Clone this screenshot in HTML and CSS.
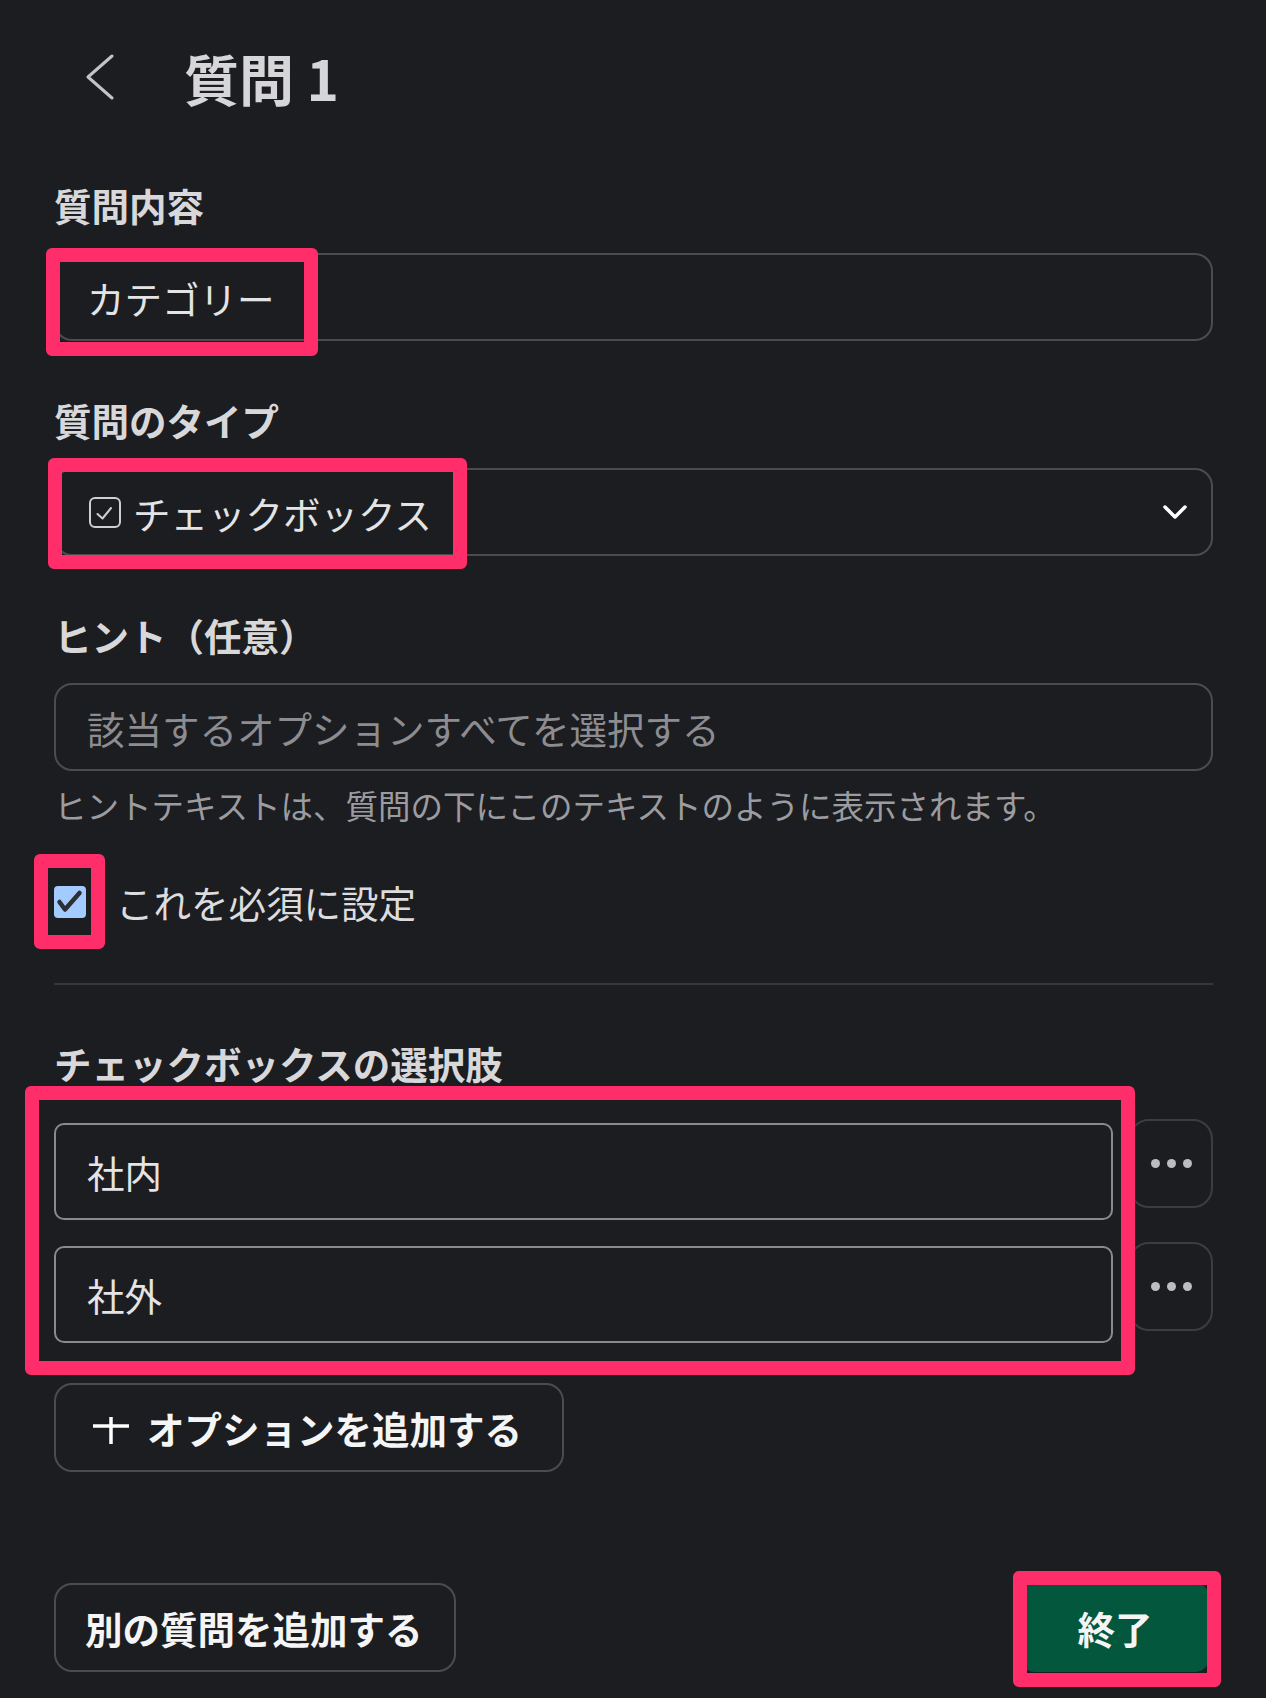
FILE: index.html
```html
<!DOCTYPE html>
<html lang="ja">
<head>
<meta charset="utf-8">
<title>質問 1</title>
<link rel="stylesheet" href="styles.css">
</head>
<body>
<div class="page">
  <header class="header">
    <svg class="back" width="28" height="46" viewBox="0 0 28 46" aria-hidden="true"><polyline points="26,2 2,23 26,44"/></svg>
    <h1 class="title">質問 1</h1>
  </header>

  <section class="field field-first">
    <div class="label">質問内容</div>
    <div class="input">カテゴリー</div>
  </section>

  <section class="field">
    <div class="label">質問のタイプ</div>
    <div class="input select">
      <svg class="type-icon" width="32" height="31" viewBox="0 0 32 31" aria-hidden="true"><rect x="1" y="1" width="30" height="29" rx="5"/><polyline points="8.5,17 13.5,21.5 22,11"/></svg>
      <span class="select-text">チェックボックス</span>
      <svg class="caret" width="26" height="16" viewBox="0 0 26 16" aria-hidden="true"><polyline points="3,3 13,13 23,3"/></svg>
    </div>
  </section>

  <section class="field">
    <div class="label">ヒント（任意）</div>
    <div class="input placeholder">該当するオプションすべてを選択する</div>
    <p class="help">ヒントテキストは、質問の下にこのテキストのように表示されます。</p>
  </section>

  <div class="required">
    <span class="cb"><svg width="32" height="32" viewBox="0 0 32 32" aria-hidden="true"><rect width="32" height="32" rx="4"/><polyline points="5.5,16 11,23.5 25.5,7"/></svg></span>
    <span class="required-text">これを必須に設定</span>
  </div>

  <div class="divider"></div>

  <section class="options">
    <div class="label">チェックボックスの選択肢</div>
    <div class="option-list">
      <div class="option-row">
        <div class="option-input">社内</div>
        <div class="more"><i></i><i></i><i></i></div>
      </div>
      <div class="option-row">
        <div class="option-input">社外</div>
        <div class="more"><i></i><i></i><i></i></div>
      </div>
    </div>
    <div class="btn add-option">
      <svg class="plus" width="36" height="36" viewBox="0 0 36 36" aria-hidden="true"><line x1="0" y1="16" x2="36" y2="16"/><line x1="18" y1="7" x2="18" y2="34"/></svg>
      <span>オプションを追加する</span>
    </div>
  </section>

  <footer class="footer">
    <div class="btn">別の質問を追加する</div>
    <div class="btn primary">終了</div>
  </footer>

  <div class="hl hl-1"></div>
  <div class="hl hl-2"></div>
  <div class="hl hl-3"></div>
  <div class="hl hl-4"></div>
  <div class="hl hl-5"></div>
</div>
</body>
</html>
```

FILE: styles.css
```css
* { box-sizing: border-box; }

html, body {
  margin: 0;
  padding: 0;
  background: #1c1d21;
}

body {
  font-family: "Noto Sans CJK JP", "Noto Sans", sans-serif;
  color: #dcdcde;
}

.page {
  position: relative;
  width: 1266px;
  min-height: 1698px;
  padding: 0 53px 0 54px;
  overflow: hidden;
}

.header {
  display: flex;
  align-items: center;
  height: 107px;
  padding-top: 47px;
  padding-left: 32px;
}

.back {
  flex: none;
  fill: none;
  stroke: #c4c4c7;
  stroke-width: 3;
  stroke-linecap: round;
  stroke-linejoin: round;
}

.title {
  margin: 0 0 0 70px;
  font-size: 55px;
  line-height: 60px;
  font-weight: 700;
  color: #d6d6d8;
}

.field {
  margin-top: 57px;
}

.field-first {
  margin-top: 76px;
}

.label {
  font-size: 37.5px;
  line-height: 44px;
  font-weight: 700;
  color: #d8d8da;
  margin-bottom: 26px;
}

.input {
  display: flex;
  align-items: center;
  height: 88px;
  padding-left: 31px;
  border: 2px solid #4b4c51;
  border-radius: 18px;
  font-size: 37.5px;
  color: #e4e4e6;
}

.placeholder {
  color: #8d8d91;
}

.select {
  padding-right: 23px;
}

.type-icon {
  flex: none;
  margin-left: 2px;
  fill: none;
  stroke: #cfcfd2;
  stroke-width: 2;
  stroke-linecap: round;
  stroke-linejoin: round;
}

.select-text {
  margin-left: 12px;
}

.caret {
  margin-left: auto;
  fill: none;
  stroke: #ffffff;
  stroke-width: 3.5;
  stroke-linecap: round;
  stroke-linejoin: round;
}

.help {
  margin: 14px 0 0;
  font-size: 32.5px;
  line-height: 40px;
  color: #9c9ca0;
}

.required {
  display: flex;
  align-items: center;
  gap: 30px;
  height: 44px;
  margin-top: 55px;
}

.cb {
  display: flex;
  flex: none;
}

.cb rect {
  fill: #a3cbff;
}

.cb polyline {
  fill: none;
  stroke: #2e2f34;
  stroke-width: 4.5;
  stroke-linecap: round;
  stroke-linejoin: round;
}

.required-text {
  font-size: 37.5px;
  line-height: 44px;
  color: #dcdcde;
}

.divider {
  height: 2px;
  margin-top: 59px;
  background: #36373b;
}

.options {
  margin-top: 56px;
}

.options .label {
  margin-bottom: 0;
}

.option-list {
  display: flex;
  flex-direction: column;
  gap: 22px;
  margin-top: 34px;
}

.option-row {
  display: flex;
  align-items: flex-start;
  gap: 16px;
}

.option-input {
  flex: 1;
  display: flex;
  align-items: center;
  height: 97px;
  margin-top: 4px;
  padding-left: 31px;
  border: 2px solid #8a8a8e;
  border-radius: 10px;
  font-size: 37.5px;
  color: #e4e4e6;
}

.more {
  flex: none;
  display: flex;
  align-items: center;
  justify-content: center;
  gap: 7px;
  width: 84px;
  height: 89px;
  border: 2px solid #3c3d42;
  border-radius: 20px;
}

.more i {
  width: 9px;
  height: 9px;
  border-radius: 50%;
  background: #bdbdc1;
}

.btn {
  display: inline-flex;
  align-items: center;
  height: 89px;
  border: 2px solid #4b4c51;
  border-radius: 18px;
  font-size: 37.5px;
  font-weight: 700;
  color: #f5f5f5;
  white-space: nowrap;
}

.add-option {
  margin-top: 40px;
  padding: 0 40px 0 37px;
  gap: 18px;
}

.plus {
  flex: none;
  stroke: #ffffff;
  stroke-width: 3.5;
}

.footer {
  display: flex;
  justify-content: space-between;
  margin-top: 111px;
}

.footer .btn {
  padding: 0 31px 0 29px;
}

.footer .primary {
  width: 188px;
  margin-right: 4px;
  padding: 0;
  justify-content: center;
  background: #02573d;
  border-color: #02573d;
  border-radius: 14px;
}

.hl {
  position: absolute;
  border: 14px solid #ff2d6a;
  border-radius: 6px;
  pointer-events: none;
}

.hl-1 { left: 46px; top: 248px; width: 272px; height: 108px; }
.hl-2 { left: 48px; top: 458px; width: 419px; height: 111px; }
.hl-3 { left: 34px; top: 854px; width: 71px; height: 95px; }
.hl-4 { left: 25px; top: 1086px; width: 1110px; height: 289px; }
.hl-5 { left: 1013px; top: 1571px; width: 208px; height: 116px; }
```
